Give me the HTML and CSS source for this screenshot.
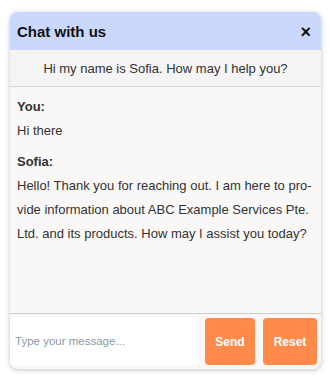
FILE: index.html
```html
<!DOCTYPE html>
<html>
<head>
<meta charset="utf-8">
<link rel="stylesheet" href="styles.css">
</head>
<body>
<div class="chat">
  <div class="header">
    <span class="title">Chat with us</span>
    <span class="close">&times;</span>
  </div>
  <div class="intro">Hi my name is Sofia. How may I help you?</div>
  <div class="messages">
    <div class="msg">
      <div class="who">You:</div>
      <div class="text">Hi there</div>
    </div>
    <div class="msg">
      <div class="who">Sofia:</div>
      <div class="text">Hello! Thank you for reaching out. I am here to pro-<br>vide information about ABC Example Services Pte.<br>Ltd. and its products. How may I assist you today?</div>
    </div>
  </div>
  <div class="composer">
    <input class="input" type="text" placeholder="Type your message...">
    <button class="btn btn-send">Send</button>
    <button class="btn btn-reset">Reset</button>
  </div>
</div>
</body>
</html>
```
FILE: styles.css
```css
* { box-sizing: border-box; }
html, body { margin: 0; padding: 0; background: #fff; }
body { padding: 12px 8px 10px 10px; font-family: "Liberation Sans", Arial, sans-serif; }
.chat {
  width: 311px;
  height: 357px;
  border-radius: 8px;
  overflow: hidden;
  box-shadow: 0 1px 5px rgba(0,0,0,0.25);
  display: flex;
  flex-direction: column;
  background: #f9f8f6;
}
.header {
  height: 38px;
  background: #c9d8fc;
  display: flex;
  align-items: center;
  justify-content: space-between;
  padding: 0 10px 0 7px;
}
.title { font-weight: bold; font-size: 15px; color: #111; }
.close { font-size: 18px; font-weight: bold; color: #111; line-height: 1; margin-top: 1px; }
.intro {
  height: 37px;
  background: #f4f4f4;
  border-bottom: 1px solid #d6d6d6;
  display: flex;
  align-items: center;
  justify-content: center;
  font-size: 13px;
  color: #333;
}
.messages {
  flex: 1;
  padding: 8px 7px;
  font-size: 13px;
  color: #333;
  line-height: 24px;
}
.msg { margin-bottom: 7px; }
.who { font-weight: bold; }
.composer {
  height: 56px;
  border-top: 1px solid #ccc;
  display: flex;
  align-items: flex-start;
  padding: 3px 4px 0 0;
}
.input {
  flex: 1;
  height: 48px;
  margin-right: 6px;
  border: none;
  border-radius: 4px;
  background: #fff;
  padding: 0 5px;
  font-family: "Liberation Sans", Arial, sans-serif;
  font-size: 11.5px;
  outline: none;
}
.input::placeholder { color: #8b9aa6; }
.btn {
  height: 47px;
  border: none;
  border-radius: 4px;
  background: #ff8a4c;
  color: #fff;
  font-weight: bold;
  font-family: "Liberation Sans", Arial, sans-serif;
  font-size: 12px;
  padding: 0;
  margin-top: 1px;
}
.btn-send { width: 50px; }
.btn-reset { width: 54px; margin-left: 8px; }
```
